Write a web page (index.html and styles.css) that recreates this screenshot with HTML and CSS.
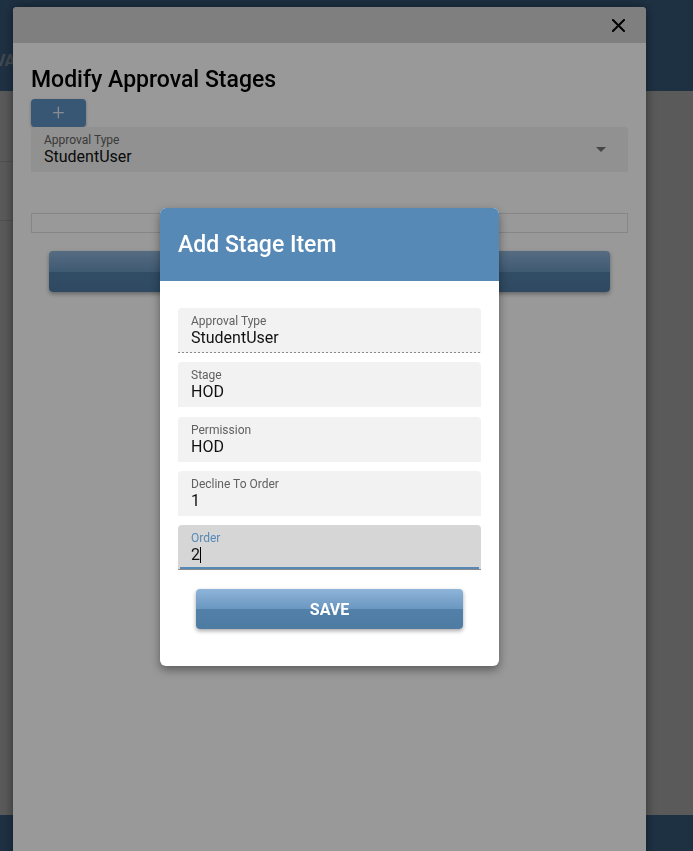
FILE: index.html
```html
<!DOCTYPE html>
<html lang="en">
<head>
<meta charset="utf-8">
<title>Modify Approval Stages</title>
<link rel="stylesheet" href="styles.css">
</head>
<body>
<div class="page">
  <header class="page-header"><span class="page-title">VAL</span></header>
  <main class="page-main">
    <div class="page-row r1"></div>
    <div class="page-row r2"></div>
  </main>
  <footer class="page-footer"></footer>
</div>

<div class="backdrop"></div>

<section class="modal">
  <div class="modal-head">
    <button class="close-btn" aria-label="Close">
      <svg width="13" height="13" viewBox="0 0 13 13"><path d="M1 1 L12 12 M12 1 L1 12" stroke="#000" stroke-width="2" stroke-linecap="square"/></svg>
    </button>
  </div>
  <div class="modal-body">
    <h2 class="modal-title">Modify Approval Stages</h2>
    <button class="add-btn">+</button>
    <div class="field select">
      <div class="field-text">
        <div class="field-label">Approval Type</div>
        <div class="field-value">StudentUser</div>
      </div>
      <span class="arrow"></span>
    </div>
    <div class="empty-box"></div>
    <button class="gbtn wide"></button>
  </div>
</section>

<div class="backdrop"></div>

<section class="dialog">
  <div class="dialog-head">Add Stage Item</div>
  <div class="dialog-body">
    <div class="field disabled">
      <div class="field-label">Approval Type</div>
      <div class="field-value">StudentUser</div>
    </div>
    <div class="field">
      <div class="field-label">Stage</div>
      <div class="field-value">HOD</div>
    </div>
    <div class="field">
      <div class="field-label">Permission</div>
      <div class="field-value">HOD</div>
    </div>
    <div class="field">
      <div class="field-label">Decline To Order</div>
      <div class="field-value">1</div>
    </div>
    <div class="field focused">
      <div class="field-label">Order</div>
      <div class="field-value">2<span class="caret"></span></div>
    </div>
    <button class="gbtn save">SAVE</button>
  </div>
</section>
</body>
</html>
```

FILE: styles.css
```css
* { box-sizing: border-box; }

html, body {
  margin: 0;
  height: 100%;
  overflow: hidden;
}

body {
  font-family: Roboto, "Liberation Sans", sans-serif;
  background: #fcfcfc;
}

.page {
  height: 851px;
  display: flex;
  flex-direction: column;
}

.page-header {
  height: 91px;
  background: #568bbd;
  padding-top: 51px;
  overflow: hidden;
}

.page-title {
  display: block;
  margin-left: -5px;
  font-size: 16px;
  font-weight: 700;
  color: rgba(255, 255, 255, 0.6);
  line-height: 20px;
}

.page-main {
  flex: 1;
  background: #fcfcfc;
}

.page-row {
  width: 240px;
  border-bottom: 1px solid #e0e0e0;
}
.page-row.r1 { height: 71px; }
.page-row.r2 { height: 59px; }

.page-footer {
  height: 36px;
  background: #568bbd;
}

.backdrop {
  position: fixed;
  inset: 0;
  background: rgba(0, 0, 0, 0.4);
}

/* outer modal */
.modal {
  position: absolute;
  left: 13px;
  top: 7px;
  width: 633px;
  height: 870px;
  background: #fff;
  border-radius: 4px 4px 0 0;
  box-shadow: 0 0 12px rgba(0, 0, 0, 0.45);
  display: flex;
  flex-direction: column;
}

.modal-head {
  height: 36px;
  background: #d4d4d4;
  border-radius: 4px 4px 0 0;
  display: flex;
  align-items: center;
  justify-content: flex-end;
  padding-right: 21px;
}

.close-btn {
  border: 0;
  background: none;
  padding: 0;
  width: 13px;
  height: 13px;
  display: flex;
  margin-top: 1px;
}

.modal-body {
  padding: 0 18px;
  display: flex;
  flex-direction: column;
}

.modal-title {
  margin: 23px 0 6px;
  font-size: 23px;
  line-height: 27px;
  font-weight: 500;
  color: #000;
}

.add-btn {
  width: 55px;
  height: 28px;
  border: 0;
  border-radius: 4px;
  background: #5e92c4;
  color: rgba(255, 255, 255, 0.8);
  font-family: Roboto, "Liberation Sans", sans-serif;
  font-size: 22px;
  font-weight: 300;
  line-height: 28px;
  padding: 0;
  box-shadow: 0 1px 3px rgba(0, 0, 0, 0.3);
}

/* fields */
.field {
  height: 45px;
  background: #f2f2f2;
  border-radius: 4px 4px 0 0;
  padding: 6px 13px 0;
  position: relative;
}

.field-label {
  font-size: 12px;
  line-height: 14px;
  color: #616161;
}

.field-value {
  font-size: 16px;
  line-height: 20px;
  color: #111;
}

.field.select {
  display: flex;
  align-items: center;
  padding: 0 22px 0 13px;
}

.field.select .field-text {
  flex: 1;
}

.arrow {
  width: 0;
  height: 0;
  border-left: 5px solid transparent;
  border-right: 5px solid transparent;
  border-top: 5px solid #757575;
}

.field.disabled {
  background:
    linear-gradient(to right, #8a8a8a 50%, transparent 50%) left bottom / 4px 1px repeat-x,
    #f2f2f2;
}

.field.focused {
  background: #d6d6d6;
  border-bottom: 1px solid #8a8a8a;
}

.field.focused::after {
  content: "";
  position: absolute;
  left: 2px;
  right: 2px;
  bottom: 0;
  height: 2px;
  background: #5789b6;
}

.field.focused .field-label { color: #5789b6; }

.caret {
  display: inline-block;
  width: 1px;
  height: 16px;
  background: #000;
  vertical-align: -3px;
}

.empty-box {
  height: 20px;
  margin-top: 41px;
  border: 1px solid #e0e0e0;
}

/* gradient buttons */
.gbtn {
  border: 0;
  border-radius: 4px;
  background: linear-gradient(to bottom, #8fb4d9 0%, #6a97c0 50%, #5280a8 50%, #4e7ba2 100%);
  box-shadow: 0 2px 4px rgba(0, 0, 0, 0.35);
  color: #fff;
  font-family: Roboto, "Liberation Sans", sans-serif;
  font-weight: 700;
  font-size: 16px;
}

.gbtn.wide {
  height: 41px;
  margin: 18px 18px 0;
}

.gbtn.save {
  height: 40px;
  margin: 10px 18px 0;
}

/* inner dialog */
.dialog {
  position: absolute;
  left: 160px;
  top: 208px;
  width: 339px;
  background: #fff;
  border-radius: 6px;
  overflow: hidden;
  box-shadow: 0 4px 10px rgba(0, 0, 0, 0.4);
}

.dialog-head {
  background: #5789b6;
  color: #fff;
  font-size: 23px;
  font-weight: 500;
  line-height: 28px;
  padding: 23px 18px 22px;
}

.dialog-body {
  padding: 27px 18px 37px;
  display: flex;
  flex-direction: column;
  gap: 9.25px;
}
```
